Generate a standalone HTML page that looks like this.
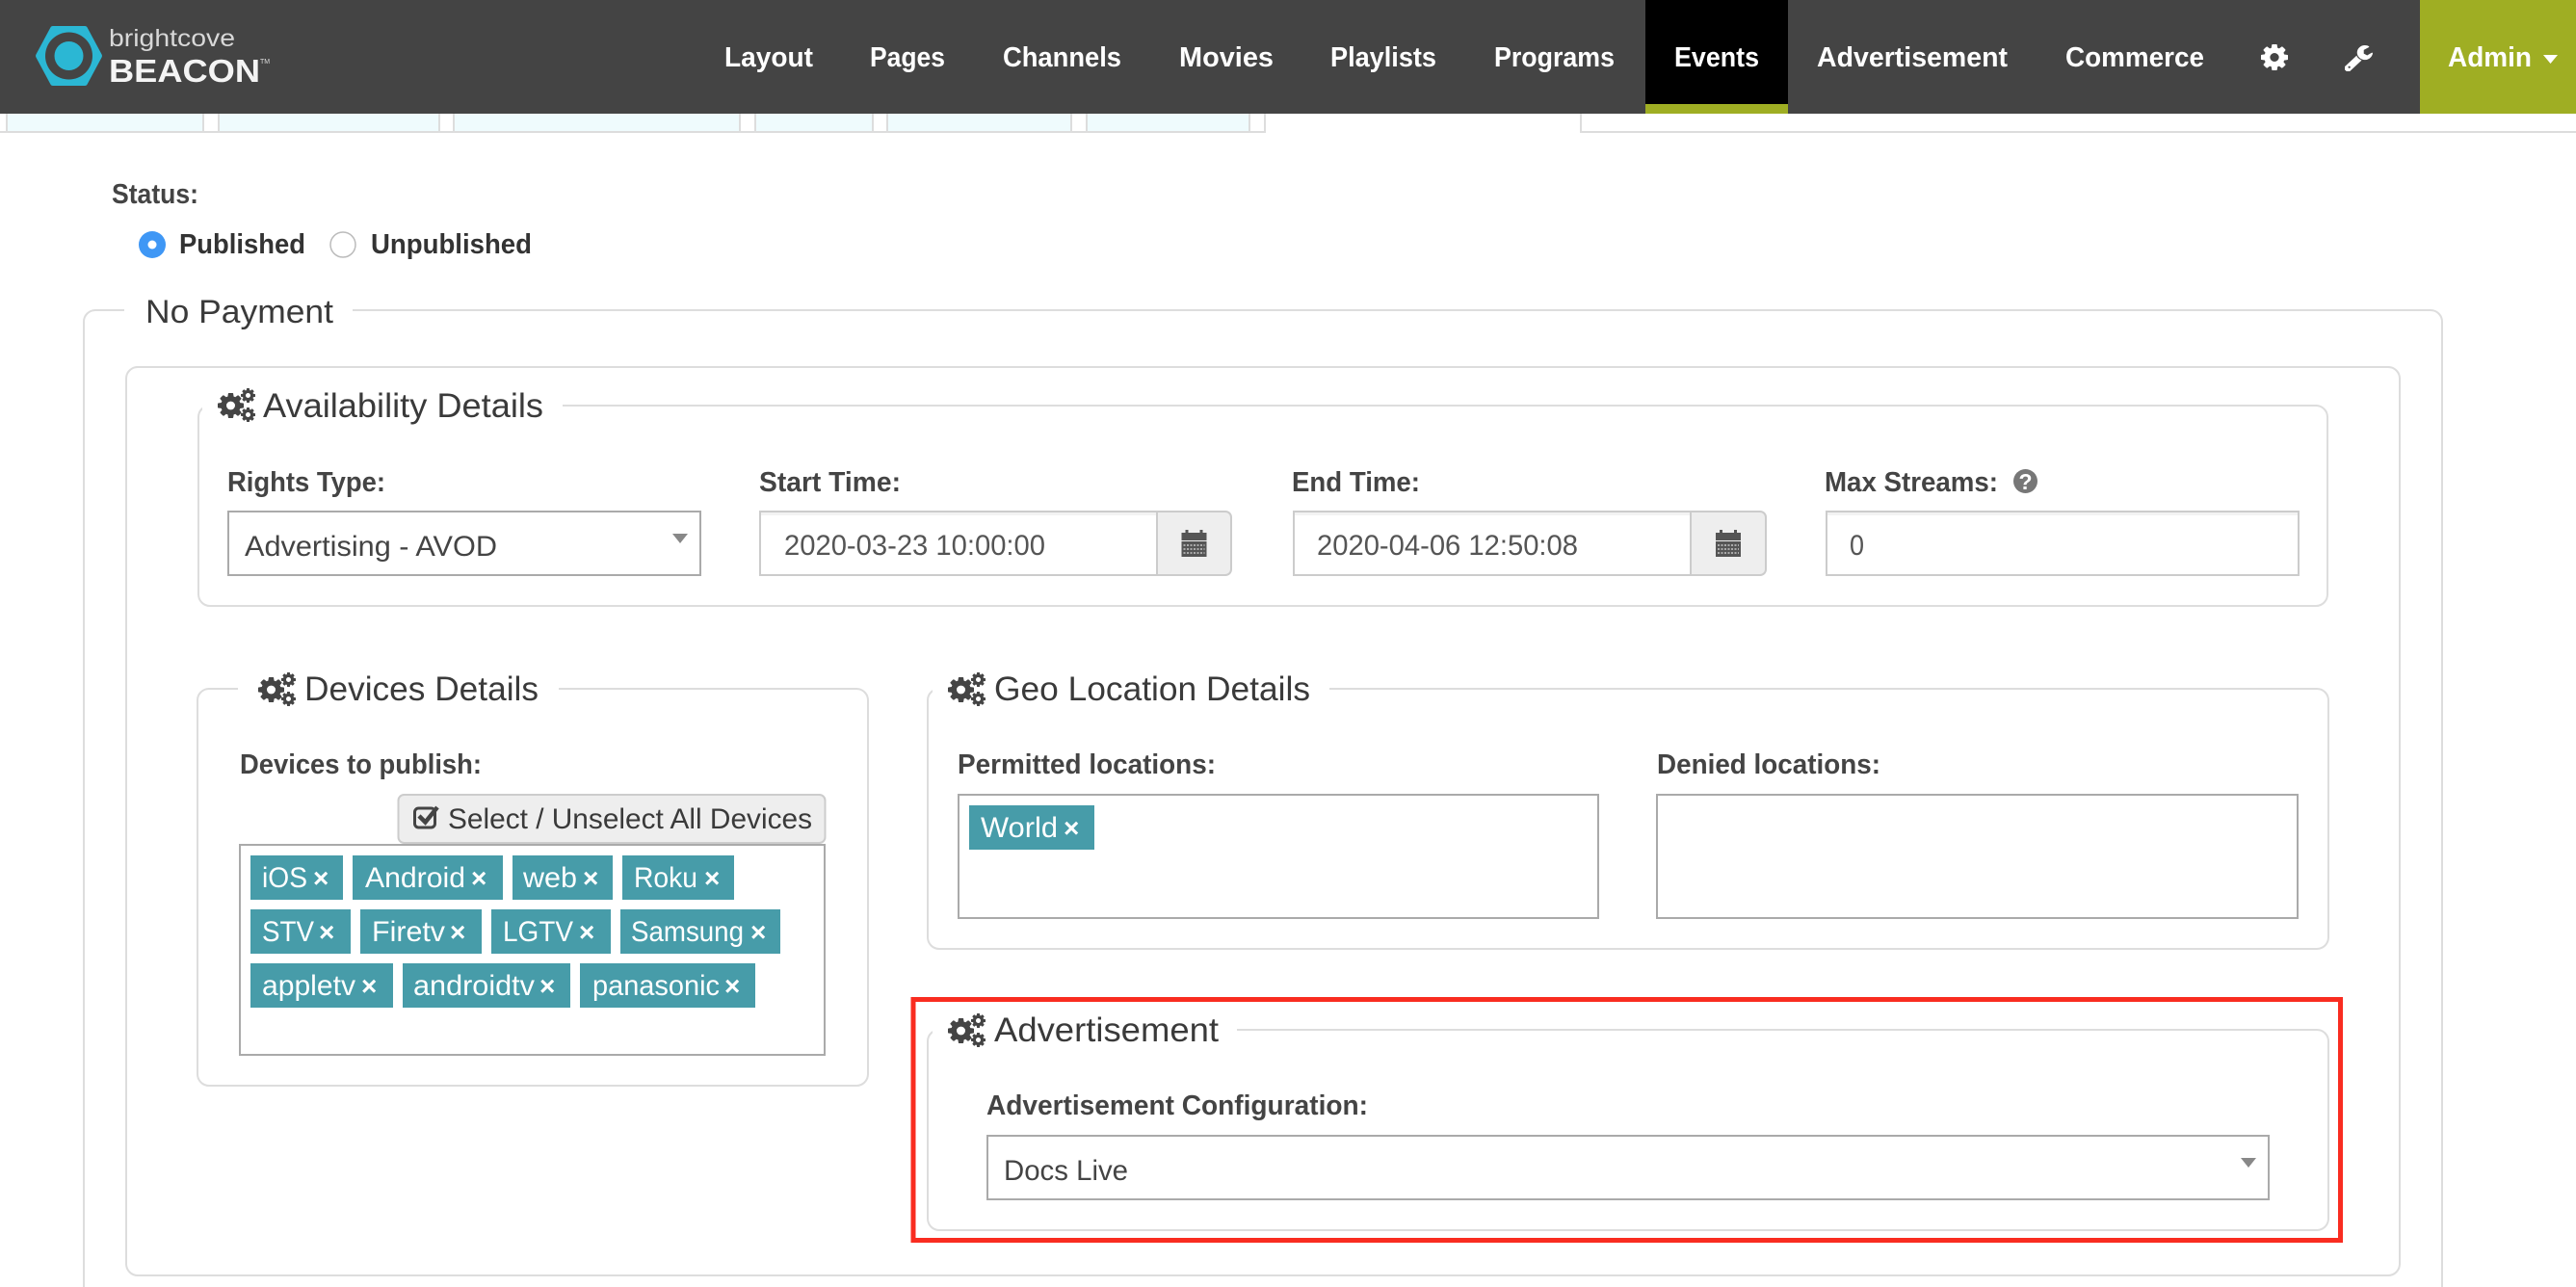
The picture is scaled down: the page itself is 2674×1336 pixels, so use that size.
<!DOCTYPE html>
<html lang="en">
<head>
<meta charset="utf-8">
<title>Brightcove Beacon - Events</title>
<style>
html,body{margin:0;padding:0;background:#fff;width:2674px;height:1336px;overflow:hidden}
svg{display:block}
text{font-family:"Liberation Sans",sans-serif}
.nav{font-size:29px;font-weight:700;fill:#fff}
.lb{font-size:29px;font-weight:700;fill:#444}
.rd{font-size:29px;font-weight:700;fill:#333}
.lg{font-size:35px;fill:#3a3a3a}
.in{font-size:30px;fill:#555}
.tg{font-size:30px;fill:#fff}
.xx{font-size:28px;font-weight:700;fill:#fff}
.fs{fill:none;stroke:#ddd;stroke-width:2}
.bx{fill:#fff;stroke:#aaa;stroke-width:2}
.ip{fill:#fff;stroke:#ccc;stroke-width:2}
.t{fill:#479ca9}
.v{fill:#ddd}
.f{fill:#effbfd}
</style>
</head>
<body>
<svg width="2674" height="1336" viewBox="0 0 2674 1336" xmlns="http://www.w3.org/2000/svg">
<defs>
<symbol id="cog" viewBox="128 128 1536 1536" preserveAspectRatio="none"><path fill-rule="evenodd" d="M1152 896q0-106-75-181t-181-75-181 75-75 181 75 181 181 75 181-75 75-181zm512-109v222q0 12-8 23t-20 13l-185 28q-19 54-39 91 35 50 107 138 10 12 10 25t-9 23q-27 37-99 108t-94 71q-12 0-26-9l-138-108q-44 23-91 38-16 136-29 186-7 28-36 28h-222q-14 0-24.5-8.5t-11.5-21.5l-28-184q-49-16-90-37l-141 107q-10 9-25 9-14 0-25-11-126-114-165-168-7-10-7-23 0-12 8-23 15-21 51-66.5t54-70.5q-27-50-41-99l-183-27q-13-2-21-12.5t-8-23.5v-222q0-12 8-23t19-13l186-28q14-46 39-92-40-57-107-138-10-12-10-24 0-10 9-23 26-36 98.5-107.5t94.5-71.5q13 0 26 10l138 107q44-23 91-38 16-136 29-186 7-28 36-28h222q14 0 24.5 8.5t11.5 21.5l28 184q49 16 90 37l142-107q9-9 24-9 13 0 25 10 129 119 165 170 7 8 7 22 0 12-8 23-15 21-51 66.5t-54 70.5q26 50 41 98l183 28q13 2 21 12.5t8 23.5z"/></symbol>
<g id="gears" fill="#444">
<use href="#cog" x="0" y="5" width="27" height="26"/>
<use href="#cog" x="24" y="0" width="15" height="15"/>
<use href="#cog" x="24" y="20" width="15" height="15"/>
</g>
<g id="cal">
<rect x="0" y="3" width="26" height="8" fill="#555"/>
<rect x="4" y="0" width="3" height="5" fill="#555"/>
<rect x="19" y="0" width="3" height="5" fill="#555"/>
<rect x="0" y="12" width="26" height="16" fill="#555"/>
<path d="M2 16H24M2 20H24M2 24H24" stroke="#aaa" stroke-width="2" stroke-dasharray="2 1.500" fill="none"/>
</g>
</defs>

<!-- tab strip remnants -->
<rect x="8" y="118" width="202" height="18" class="f"/>
<rect x="228" y="118" width="227" height="18" class="f"/>
<rect x="472" y="118" width="295" height="18" class="f"/>
<rect x="785" y="118" width="120" height="18" class="f"/>
<rect x="922" y="118" width="189" height="18" class="f"/>
<rect x="1129" y="118" width="167" height="18" class="f"/>
<rect x="6" y="118" width="2" height="18" class="v"/>
<rect x="210" y="118" width="2" height="18" class="v"/>
<rect x="226" y="118" width="2" height="18" class="v"/>
<rect x="455" y="118" width="2" height="18" class="v"/>
<rect x="470" y="118" width="2" height="18" class="v"/>
<rect x="767" y="118" width="2" height="18" class="v"/>
<rect x="783" y="118" width="2" height="18" class="v"/>
<rect x="905" y="118" width="2" height="18" class="v"/>
<rect x="920" y="118" width="2" height="18" class="v"/>
<rect x="1111" y="118" width="2" height="18" class="v"/>
<rect x="1127" y="118" width="2" height="18" class="v"/>
<rect x="1296" y="118" width="2" height="18" class="v"/>
<rect x="1312" y="118" width="2" height="18" class="v"/>
<rect x="1640" y="118" width="2" height="18" class="v"/>
<rect x="0" y="136" width="1314" height="2" class="v"/>
<rect x="1640" y="136" width="1034" height="2" class="v"/>

<!-- header -->
<rect x="0" y="0" width="2674" height="118" fill="#444"/>
<rect x="1708" y="0" width="148" height="108" fill="#000"/>
<rect x="1708" y="108" width="148" height="10" fill="#9fae23"/>
<rect x="2512" y="0" width="162" height="118" fill="#9fae23"/>

<!-- logo -->
<polygon points="40,58 55,30 88,30 103,58 88,86 55,86" fill="#2bb7d4" stroke="#2bb7d4" stroke-width="6" stroke-linejoin="round"/>
<circle cx="71.5" cy="58" r="24.500" fill="#444"/>
<circle cx="71.5" cy="58" r="15" fill="#2bb7d4"/>
<text x="113" y="48" font-size="25" fill="#d8d8d8" textLength="131" lengthAdjust="spacingAndGlyphs">brightcove</text>
<text x="113" y="85" font-size="33" font-weight="700" fill="#f4f4f4" textLength="157" lengthAdjust="spacingAndGlyphs">BEACON</text>
<text x="270" y="66" font-size="7" fill="#ddd">TM</text>

<!-- nav -->
<text class="nav" x="752" y="69" textLength="92" lengthAdjust="spacingAndGlyphs">Layout</text>
<text class="nav" x="903" y="69" textLength="78" lengthAdjust="spacingAndGlyphs">Pages</text>
<text class="nav" x="1041" y="69" textLength="123" lengthAdjust="spacingAndGlyphs">Channels</text>
<text class="nav" x="1224" y="69" textLength="98" lengthAdjust="spacingAndGlyphs">Movies</text>
<text class="nav" x="1381" y="69" textLength="110" lengthAdjust="spacingAndGlyphs">Playlists</text>
<text class="nav" x="1551" y="69" textLength="125" lengthAdjust="spacingAndGlyphs">Programs</text>
<text class="nav" x="1738" y="69" textLength="88" lengthAdjust="spacingAndGlyphs">Events</text>
<text class="nav" x="1886" y="69" textLength="198" lengthAdjust="spacingAndGlyphs">Advertisement</text>
<text class="nav" x="2144" y="69" textLength="144" lengthAdjust="spacingAndGlyphs">Commerce</text>
<text class="nav" x="2541" y="69" textLength="87" lengthAdjust="spacingAndGlyphs">Admin</text>
<use href="#cog" x="2347" y="46" width="28" height="27" fill="#fff"/>
<svg x="2434" y="47" width="29" height="27" viewBox="128 128 1600 1600" preserveAspectRatio="none"><path fill="#fff" fill-rule="evenodd" d="M448 1472q0-26-19-45t-45-19-45 19-19 45 19 45 45 19 45-19 19-45zm644-420l-682 682q-37 37-90 37-52 0-91-37l-106-108q-38-36-38-90 0-53 38-91l681-681q39 98 114.5 173.5t173.5 114.5zm634-435q0 39-23 106-47 134-164.5 217.5t-258.5 83.5q-185 0-316.5-131.5t-131.5-316.5 131.5-316.5 316.5-131.5q58 0 121.5 16.5t107.5 46.5q16 11 16 28t-16 28l-293 169v224l193 107q5-3 79-48.5t135.5-81 70.5-35.5q15 0 23.5 10t8.5 25z"/></svg>
<polygon points="2640,57 2655,57 2647.5,66" fill="#fff"/>

<!-- status -->
<text class="lb" x="116" y="211" textLength="90" lengthAdjust="spacingAndGlyphs">Status:</text>
<circle cx="158" cy="254" r="14" fill="#3f97f5"/>
<circle cx="158" cy="254" r="4.5" fill="#fff"/>
<text class="rd" x="186" y="263" textLength="131" lengthAdjust="spacingAndGlyphs">Published</text>
<circle cx="356" cy="254" r="13" fill="#fff" stroke="#bbb" stroke-width="1.5"/>
<text class="rd" x="385" y="263" textLength="167" lengthAdjust="spacingAndGlyphs">Unpublished</text>

<!-- outer fieldsets -->
<path class="fs" d="M87 1336V334a12 12 0 0 1 12-12H2523a12 12 0 0 1 12 12V1336"/>
<rect x="129" y="316" width="237" height="12" fill="#fff"/>
<text x="151" y="335" font-size="34" fill="#3a3a3a" textLength="195" lengthAdjust="spacingAndGlyphs">No Payment</text>
<rect class="fs" x="131" y="381" width="2360" height="943" rx="12"/>

<!-- availability -->
<rect class="fs" x="206" y="421" width="2210" height="208" rx="12"/>
<rect x="210" y="415" width="374" height="12" fill="#fff"/>
<use href="#gears" x="226" y="403"/>
<text class="lg" x="273" y="433" textLength="291" lengthAdjust="spacingAndGlyphs">Availability Details</text>

<text class="lb" x="236" y="510" textLength="164" lengthAdjust="spacingAndGlyphs">Rights Type:</text>
<rect class="bx" x="237" y="531" width="490" height="66"/>
<text class="in" x="254" y="577" textLength="262" lengthAdjust="spacingAndGlyphs" style="fill:#444">Advertising - AVOD</text>
<polygon points="698,554 714,554 706,564" fill="#888"/>

<text class="lb" x="788" y="510" textLength="147" lengthAdjust="spacingAndGlyphs">Start Time:</text>
<path d="M1201 531H1272a6 6 0 0 1 6 6V591a6 6 0 0 1 -6 6H1201Z" fill="#eee" stroke="#ccc" stroke-width="2"/>
<rect class="ip" x="789" y="531" width="412" height="66"/>
<rect x="790" y="532" width="410" height="3" fill="#f3f3f3"/>
<text class="in" x="814" y="576" textLength="271" lengthAdjust="spacingAndGlyphs">2020-03-23 10:00:00</text>
<use href="#cal" x="1226.5" y="550"/>

<text class="lb" x="1341" y="510" textLength="133" lengthAdjust="spacingAndGlyphs">End Time:</text>
<path d="M1755 531H1827a6 6 0 0 1 6 6V591a6 6 0 0 1 -6 6H1755Z" fill="#eee" stroke="#ccc" stroke-width="2"/>
<rect class="ip" x="1343" y="531" width="412" height="66"/>
<rect x="1344" y="532" width="410" height="3" fill="#f3f3f3"/>
<text class="in" x="1367" y="576" textLength="271" lengthAdjust="spacingAndGlyphs">2020-04-06 12:50:08</text>
<use href="#cal" x="1781" y="550"/>

<text class="lb" x="1894" y="510" textLength="180" lengthAdjust="spacingAndGlyphs">Max Streams:</text>
<circle cx="2102.5" cy="499.5" r="12.5" fill="#777"/>
<text x="2102.5" y="508" font-size="23" font-weight="700" fill="#fff" text-anchor="middle">?</text>
<rect class="ip" x="1896" y="531" width="490" height="66"/>
<rect x="1897" y="532" width="488" height="3" fill="#f3f3f3"/>
<text class="in" x="1920" y="576" textLength="15" lengthAdjust="spacingAndGlyphs">0</text>

<!-- devices -->
<rect class="fs" x="205" y="715" width="696" height="412" rx="12"/>
<rect x="247" y="709" width="333" height="12" fill="#fff"/>
<use href="#gears" x="268" y="698"/>
<text class="lg" x="316" y="727" textLength="243" lengthAdjust="spacingAndGlyphs">Devices Details</text>
<text class="lb" x="249" y="803" textLength="251" lengthAdjust="spacingAndGlyphs">Devices to publish:</text>
<rect x="413.500" y="825" width="443" height="50" rx="6" fill="#eee" stroke="#ccc" stroke-width="2"/>
<rect x="430.500" y="839" width="21" height="20" rx="4" fill="none" stroke="#444" stroke-width="3"/>
<path d="M435 847L441.500 853.500L454 838" fill="none" stroke="#444" stroke-width="4.500"/>
<text x="465" y="860" font-size="30" fill="#3a3a3a" textLength="378" lengthAdjust="spacingAndGlyphs">Select / Unselect All Devices</text>
<rect class="bx" x="249" y="877" width="607" height="218"/>

<rect class="t" x="260" y="888" width="96" height="46"/>
<text class="tg" x="272" y="921" textLength="47" lengthAdjust="spacingAndGlyphs">iOS</text><text class="xx" x="325" y="921">×</text>
<rect class="t" x="366" y="888" width="156" height="46"/>
<text class="tg" x="379" y="921" textLength="104" lengthAdjust="spacingAndGlyphs">Android</text><text class="xx" x="489" y="921">×</text>
<rect class="t" x="532" y="888" width="104" height="46"/>
<text class="tg" x="543" y="921" textLength="56" lengthAdjust="spacingAndGlyphs">web</text><text class="xx" x="605" y="921">×</text>
<rect class="t" x="646" y="888" width="116" height="46"/>
<text class="tg" x="658" y="921" textLength="66" lengthAdjust="spacingAndGlyphs">Roku</text><text class="xx" x="731" y="921">×</text>

<rect class="t" x="260" y="944" width="104" height="46"/>
<text class="tg" x="272" y="977" textLength="54" lengthAdjust="spacingAndGlyphs">STV</text><text class="xx" x="331" y="977">×</text>
<rect class="t" x="374" y="944" width="126" height="46"/>
<text class="tg" x="386" y="977" textLength="76" lengthAdjust="spacingAndGlyphs">Firetv</text><text class="xx" x="467" y="977">×</text>
<rect class="t" x="510" y="944" width="124" height="46"/>
<text class="tg" x="522" y="977" textLength="73" lengthAdjust="spacingAndGlyphs">LGTV</text><text class="xx" x="601" y="977">×</text>
<rect class="t" x="644" y="944" width="166" height="46"/>
<text class="tg" x="655" y="977" textLength="117" lengthAdjust="spacingAndGlyphs">Samsung</text><text class="xx" x="779" y="977">×</text>

<rect class="t" x="260" y="1000" width="148" height="46"/>
<text class="tg" x="272" y="1033" textLength="97" lengthAdjust="spacingAndGlyphs">appletv</text><text class="xx" x="375" y="1033">×</text>
<rect class="t" x="418" y="1000" width="174" height="46"/>
<text class="tg" x="429" y="1033" textLength="126" lengthAdjust="spacingAndGlyphs">androidtv</text><text class="xx" x="560" y="1033">×</text>
<rect class="t" x="602" y="1000" width="182" height="46"/>
<text class="tg" x="615" y="1033" textLength="132" lengthAdjust="spacingAndGlyphs">panasonic</text><text class="xx" x="752" y="1033">×</text>

<!-- geo -->
<rect class="fs" x="963" y="715" width="1454" height="270" rx="12"/>
<rect x="968" y="709" width="412" height="12" fill="#fff"/>
<use href="#gears" x="984" y="698"/>
<text class="lg" x="1032" y="727" textLength="328" lengthAdjust="spacingAndGlyphs">Geo Location Details</text>
<text class="lb" x="994" y="803" textLength="268" lengthAdjust="spacingAndGlyphs">Permitted locations:</text>
<rect class="bx" x="995" y="825" width="664" height="128"/>
<rect class="t" x="1006" y="836" width="130" height="46"/>
<text class="tg" x="1018" y="869" textLength="80" lengthAdjust="spacingAndGlyphs">World</text><text class="xx" x="1104" y="869">×</text>
<text class="lb" x="1720" y="803" textLength="232" lengthAdjust="spacingAndGlyphs">Denied locations:</text>
<rect class="bx" x="1720" y="825" width="665" height="128"/>

<!-- advertisement -->
<rect class="fs" x="963" y="1069" width="1454" height="208" rx="12"/>
<rect x="968" y="1063" width="316" height="12" fill="#fff"/>
<use href="#gears" x="984" y="1052"/>
<text class="lg" x="1032" y="1081" textLength="233" lengthAdjust="spacingAndGlyphs">Advertisement</text>
<text class="lb" x="1024" y="1157" textLength="396" lengthAdjust="spacingAndGlyphs">Advertisement Configuration:</text>
<rect class="bx" x="1025" y="1179" width="1330" height="66"/>
<text class="in" x="1042" y="1225" textLength="129" lengthAdjust="spacingAndGlyphs" style="fill:#444">Docs Live</text>
<polygon points="2326,1202 2342,1202 2334,1212" fill="#888"/>

<!-- annotation -->
<rect x="948" y="1037.500" width="1481.500" height="250" fill="none" stroke="#f92c20" stroke-width="5"/>
</svg>
</body>
</html>
